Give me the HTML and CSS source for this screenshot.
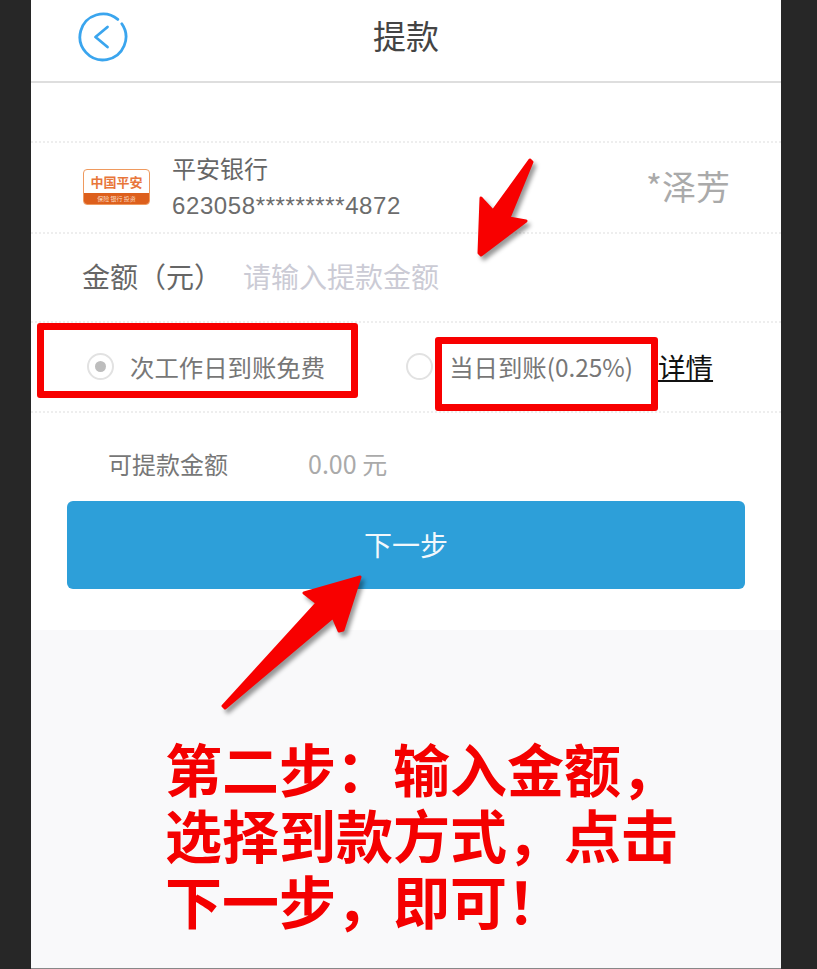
FILE: index.html
```html
<!DOCTYPE html>
<html lang="zh-CN">
<head>
    <meta charset="UTF-8">
    <meta name="viewport" content="width=device-width, initial-scale=1.0">
    <title>提款</title>
    <link rel="stylesheet" href="styles.css">
</head>
<body>
    <div class="phone">
        <!-- Header -->
        <header class="header">
            <svg class="back" width="52" height="52" viewBox="0 0 52 52">
                <path d="M40.8 8.4A23 23 0 1 0 44.8 12.8" fill="none" stroke="#3aa5ee" stroke-width="2.8" stroke-linecap="round"/>
                <path d="M30.5 16L18.5 26L30.5 36" fill="none" stroke="#3aa5ee" stroke-width="2.8" stroke-linecap="round" stroke-linejoin="round"/>
            </svg>
            <h1 class="title">提款</h1>
        </header>

        <main class="form">
            <div class="row bank-row">
                <div class="bank-logo">
                    <span class="bank-logo-name">中国平安</span>
                    <span class="bank-logo-band">保险 银行 投资</span>
                </div>
                <div class="bank-info">
                    <div class="bank-name">平安银行</div>
                    <div class="bank-card">623058*********4872</div>
                </div>
                <div class="bank-owner">*泽芳</div>
            </div>

            <div class="row amount-row">
                <span class="amount-label">金额（元）</span>
                <span class="amount-placeholder">请输入提款金额</span>
            </div>

            <div class="row pay-row">
                <span class="radio checked"></span>
                <span class="pay-text pay-free">次工作日到账免费</span>
                <span class="radio radio-second"></span>
                <span class="pay-text pay-fast">当日到账(0.25%)</span>
                <a class="detail-link" href="#detail">详情</a>
            </div>

            <div class="row balance-row">
                <span class="balance-label">可提款金额</span>
                <span class="balance-value">0.00 元</span>
            </div>

            <div class="button-wrap">
                <button class="next-button">下一步</button>
            </div>
        </main>

        <section class="footer">
            <p class="step-text">第二步：输入金额，<br>选择到款方式，点击<br>下一步，即可！</p>
        </section>

        <!-- Annotations drawn over the screenshot -->
        <div class="red-box box-free"></div>
        <div class="red-box box-fast"></div>
        <svg class="arrows" width="750" height="969" viewBox="31 0 750 969">
            <path d="M530 160L532 162L509 218L526 221L481 255L479 253L481 198L493 211Z" fill="#f80000" stroke="#f80000" stroke-width="3" stroke-linejoin="round"/>
            <path d="M223 706L225 708L333 617L339 631L343 630L360 577L304 593L317 603Z" fill="#f80000" stroke="#f80000" stroke-width="3" stroke-linejoin="round"/>
        </svg>
    </div>
</body>
</html>
```

FILE: styles.css
```css
* {
    box-sizing: border-box;
}

body {
    margin: 0;
    height: 969px;
    overflow: hidden;
    background: #272727;
    font-family: "Noto Sans CJK SC", "Liberation Sans", sans-serif;
}

.phone {
    position: relative;
    display: flex;
    flex-direction: column;
    width: 750px;
    height: 969px;
    margin-left: 31px;
    background: #fff;
}

.header {
    position: relative;
    display: flex;
    justify-content: center;
    align-items: center;
    height: 83px;
    margin-bottom: 58px;
    padding-bottom: 11px;
    border-bottom: 2px solid #dedede;
}

.back {
    position: absolute;
    left: 46px;
    top: 11px;
}

.title {
    margin: 0;
    font-size: 33px;
    font-weight: 400;
    color: #444;
}

.row {
    display: flex;
    align-items: center;
    border-top: 2px dotted #eee;
}

.bank-row {
    height: 91px;
    padding: 0 51px 0 52px;
}

.bank-logo {
    display: flex;
    flex-direction: column;
    width: 67px;
    height: 36px;
    margin-bottom: 2px;
    border: 1px solid #ef9a5f;
    border-radius: 4px;
    overflow: hidden;
    text-align: center;
}

.bank-logo-name {
    flex: 1;
    font-size: 13px;
    line-height: 23px;
    font-weight: 700;
    color: #e8763a;
}

.bank-logo-band {
    height: 12px;
    font-size: 6px;
    line-height: 12px;
    color: #fbd9c0;
    background: #dd5f1c;
}

.bank-info {
    flex: 1;
    margin-left: 22px;
    color: #666;
}

.bank-name {
    font-size: 24px;
    line-height: 38px;
    margin-top: -2px;
}

.bank-card {
    font-family: "Liberation Sans", sans-serif;
    font-size: 24px;
    line-height: 38px;
    letter-spacing: 0.6px;
    color: #6c6c6c;
}

.bank-owner {
    margin-bottom: 4px;
    font-size: 34px;
    color: #aaa;
}

.amount-row {
    height: 89px;
    padding-left: 51px;
    padding-bottom: 4px;
}

.amount-label {
    width: 161px;
    font-size: 28px;
    color: #666;
}

.amount-placeholder {
    font-size: 28px;
    color: #cbcbd5;
}

.pay-row {
    height: 90px;
    padding-left: 56px;
    padding-bottom: 2px;
}

.radio {
    position: relative;
    flex: none;
    width: 27px;
    height: 27px;
    border: 2px solid #e2e2e2;
    border-radius: 50%;
}

.radio.checked::after {
    content: "";
    position: absolute;
    left: 6px;
    top: 6px;
    width: 11px;
    height: 11px;
    border-radius: 50%;
    background: #bdbdbd;
}

.radio-second {
    margin-left: 81px;
}

.pay-text {
    font-size: 24.4px;
    color: #777;
}

.pay-free {
    margin-left: 16px;
}

.pay-fast {
    margin-left: 16px;
}

.detail-link {
    margin-left: 25px;
    font-size: 27.5px;
    color: #111;
}

.balance-row {
    height: 90px;
    padding-left: 77px;
    padding-top: 12px;
}

.balance-label {
    width: 200px;
    font-size: 24px;
    color: #777;
}

.balance-value {
    font-size: 25px;
    color: #aaa;
}

.button-wrap {
    height: 129px;
    padding: 0 36px;
}

.next-button {
    display: block;
    width: 678px;
    height: 88px;
    padding-bottom: 4px;
    border: none;
    border-radius: 6px;
    background: #2d9fd9;
    color: #f2f8fc;
    font-family: inherit;
    font-size: 28px;
}

.footer {
    flex: 1;
    padding: 104px 0 0 134px;
    background: #f9f9fa;
    border-bottom: 1px solid #888;
}

.step-text {
    margin: 0;
    font-size: 57px;
    line-height: 66px;
    font-weight: 700;
    color: #f40000;
}

.red-box {
    position: absolute;
    border: 7px solid #f80000;
    border-radius: 3px;
}

.box-free {
    left: 6px;
    top: 323px;
    width: 321px;
    height: 75px;
}

.box-fast {
    left: 404px;
    top: 337px;
    width: 223px;
    height: 74px;
}

.arrows {
    position: absolute;
    left: 0;
    top: 0;
    pointer-events: none;
    filter: drop-shadow(3px 4px 2px rgba(0, 0, 0, 0.4));
}
```
